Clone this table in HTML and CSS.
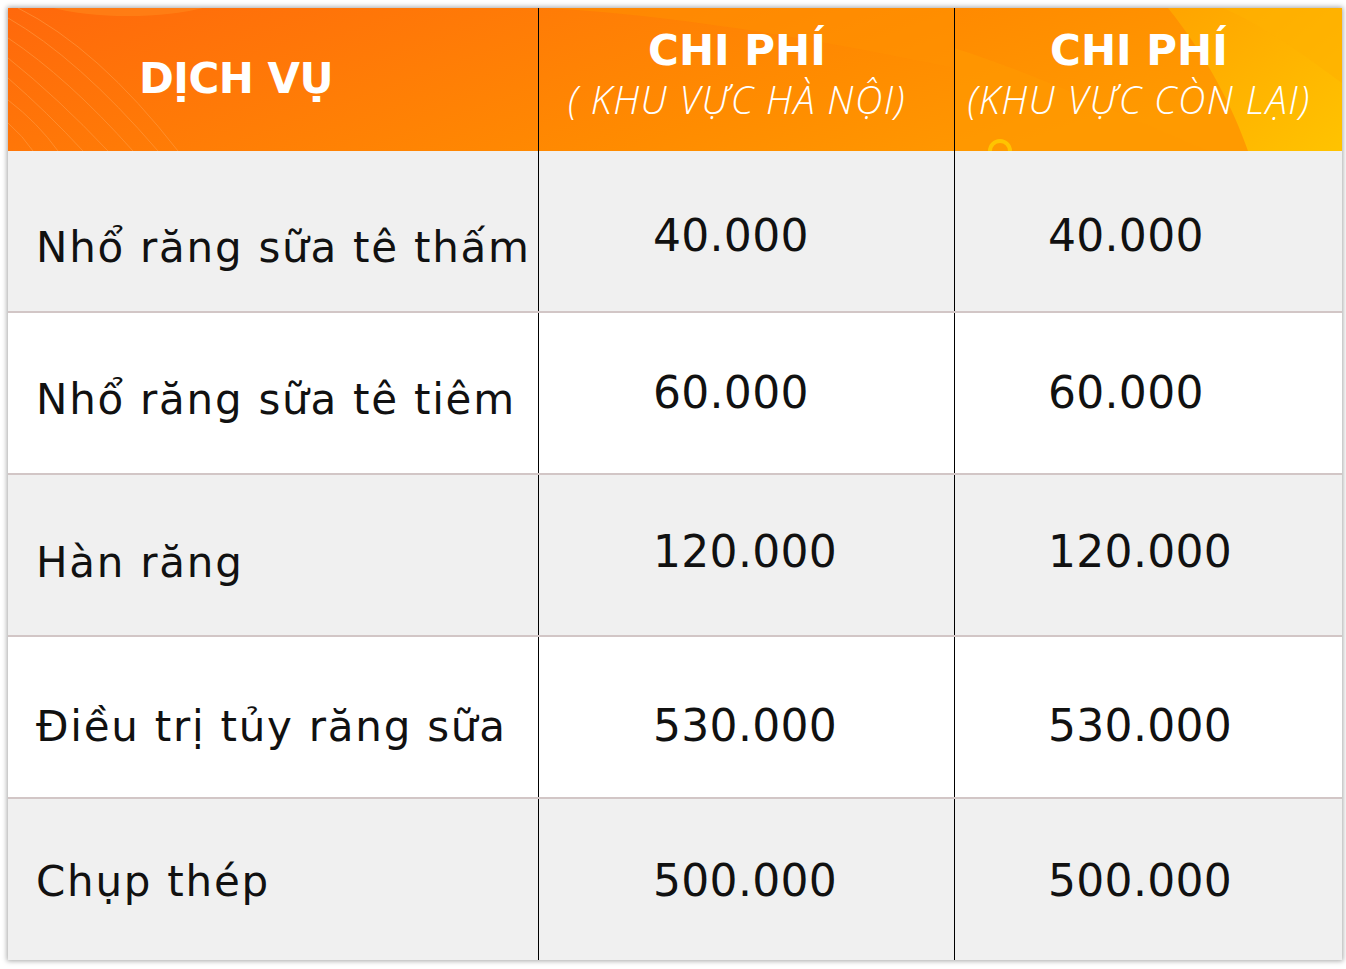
FILE: index.html
```html
<!DOCTYPE html>
<html lang="vi">
<head>
<meta charset="utf-8">
<title>Bảng giá</title>
<link rel="stylesheet" href="styles.css">
</head>
<body>
<div class="price-table">
  <div class="head-row">
    <svg class="head-bg" viewBox="0 0 1334 143" preserveAspectRatio="none" aria-hidden="true">
      <defs>
        <linearGradient id="g1" x1="0" y1="0" x2="1" y2="0.3">
          <stop offset="0" stop-color="#ff680c"/>
          <stop offset="0.4" stop-color="#ff7d06"/>
          <stop offset="0.7" stop-color="#ff8c00"/>
          <stop offset="1" stop-color="#ff9a00"/>
        </linearGradient>
        <linearGradient id="g2" x1="0" y1="0" x2="1" y2="1">
          <stop offset="0" stop-color="#ffa400"/>
          <stop offset="1" stop-color="#ffc300"/>
        </linearGradient>
      </defs>
      <rect x="0" y="0" width="1334" height="143" fill="url(#g1)"/>
      <ellipse cx="120" cy="-22" rx="110" ry="30" fill="#ff8a1e" opacity="0.55"/>
      <g fill="none" stroke="#ffa04a" stroke-width="1" opacity="0.55">
        <path d="M0,10 Q70,50 150,143"/>
        <path d="M0,30 Q60,70 125,143"/>
        <path d="M0,50 Q50,90 100,143"/>
        <path d="M0,70 Q40,105 75,143"/>
        <path d="M0,92 Q30,115 50,143"/>
        <path d="M0,115 Q15,128 25,143"/>
        <path d="M10,0 Q90,40 170,143"/>
      </g>
      <path d="M540,0 C700,10 850,40 946,60 L946,0 Z" fill="#ff9200" opacity="0.5"/>
      <path d="M946,40 C1040,70 1120,110 1200,143 L946,143 Z" fill="#ff9a00" opacity="0.6"/>
      <path d="M1160,0 C1200,50 1225,100 1240,143 L1334,143 L1334,0 Z" fill="url(#g2)"/>
      <path d="M1215,0 C1260,20 1300,50 1334,75 L1334,0 Z" fill="#ffb000" opacity="0.6"/>
      <circle cx="992" cy="143" r="10" fill="none" stroke="#ffc400" stroke-width="4"/>
    </svg>
    <div class="hcell hcell-service"><span class="htitle htitle-service">DỊCH VỤ</span></div>
    <div class="hcell hcell-price">
      <span class="htitle">CHI PHÍ</span>
      <span class="hsub">( KHU VỰC HÀ NỘI)</span>
    </div>
    <div class="hcell hcell-price">
      <span class="htitle">CHI PHÍ</span>
      <span class="hsub">(KHU VỰC CÒN LẠI)</span>
    </div>
  </div>

  <div class="row row-gray">
    <div class="cell name name-r1">Nhổ răng sữa tê thấm</div>
    <div class="cell num num-c2 num-r1">40.000</div>
    <div class="cell num num-c3 num-r1">40.000</div>
  </div>
  <div class="row row-white">
    <div class="cell name name-r2">Nhổ răng sữa tê tiêm</div>
    <div class="cell num num-c2 num-r2">60.000</div>
    <div class="cell num num-c3 num-r2">60.000</div>
  </div>
  <div class="row row-gray">
    <div class="cell name name-r3">Hàn răng</div>
    <div class="cell num num-c2 num-r3">120.000</div>
    <div class="cell num num-c3 num-r3">120.000</div>
  </div>
  <div class="row row-white">
    <div class="cell name name-r4">Điều trị tủy răng sữa</div>
    <div class="cell num num-c2 num-r4">530.000</div>
    <div class="cell num num-c3 num-r4">530.000</div>
  </div>
  <div class="row row-gray row-last">
    <div class="cell name name-r5">Chụp thép</div>
    <div class="cell num num-c2 num-r5">500.000</div>
    <div class="cell num num-c3 num-r5">500.000</div>
  </div>
</div>
</body>
</html>
```

FILE: styles.css
```css
html, body {
  margin: 0;
  padding: 0;
  background: #ffffff;
}

body {
  padding: 8px;
  font-family: "DejaVu Sans", "Liberation Sans", sans-serif;
  color: #111111;
}

.price-table {
  width: 1334px;
  display: flex;
  flex-direction: column;
  box-shadow: 0 0 5px 1px rgba(0, 0, 0, 0.35);
  background: #f0f0f0;
}

.head-row {
  position: relative;
  height: 143px;
  display: grid;
  grid-template-columns: 530px 416px 388px;
}

.head-bg {
  position: absolute;
  left: 0;
  top: 0;
  width: 100%;
  height: 100%;
  z-index: 0;
}

.hcell {
  position: relative;
  z-index: 1;
  display: flex;
  flex-direction: column;
  justify-content: center;
  color: #ffffff;
}

.hcell + .hcell {
  border-left: 1px solid #000000;
}

.hcell-service {
  padding-left: 131px;
  padding-bottom: 2px;
}

.hcell-price {
  align-items: center;
  padding-right: 19px;
  padding-bottom: 9px;
}

.htitle {
  font-weight: 700;
  font-size: 42px;
  line-height: 48px;
  white-space: nowrap;
}

.htitle-service {
  letter-spacing: -0.5px;
}

.hsub {
  font-family: "Open Sans", "DejaVu Sans", sans-serif;
  font-size: 38px;
  font-weight: 300;
  font-style: italic;
  letter-spacing: 1.5px;
  line-height: 48px;
  white-space: nowrap;
}

.row {
  height: 162px;
  display: grid;
  grid-template-columns: 530px 416px 388px;
  box-sizing: border-box;
  border-bottom: 2px solid #d2c6c6;
}

.row-last {
  height: 161px;
  border-bottom: none;
}

.row-gray {
  background: #f0f0f0;
}

.row-white {
  background: #ffffff;
}

.cell {
  display: flex;
  align-items: center;
  box-sizing: border-box;
  line-height: 1;
  white-space: nowrap;
}

.cell + .cell {
  border-left: 1px solid #000000;
}

.name {
  padding-left: 28px;
  font-size: 42px;
  letter-spacing: 1.75px;
}

.num {
  font-size: 44px;
  letter-spacing: 0.3px;
}

.num-c2 {
  padding-left: 114px;
}

.num-c3 {
  padding-left: 93px;
}

.name-r1 { padding-top: 34px; }
.num-r1 { padding-top: 10px; }
.name-r2 { padding-top: 14px; }
.num-r2 { padding-top: 0; }
.name-r3 { padding-top: 16px; }
.num-r3 { padding-bottom: 6px; }
.name-r4 { padding-top: 20px; }
.num-r4 { padding-top: 18px; }
.name-r5 { padding-top: 4px; }
.num-r5 { padding-top: 2px; }
```
